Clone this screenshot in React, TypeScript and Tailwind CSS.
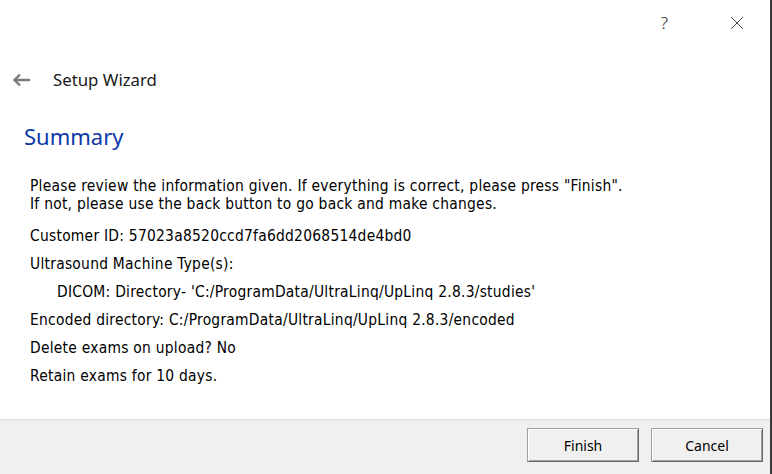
import { X } from "lucide-react";

const ui = "font-['Noto_Sans','Open_Sans',sans-serif]";

function WinButton({ label }: { label: string }) {
  return (
    <button
      className={`${ui} w-[112px] h-[34px] bg-[#f0f0f0] border border-[#a0a0a0] border-r-[#696969] border-b-[#696969] shadow-[inset_1px_1px_0_#ffffff,inset_-1px_-1px_0_#a0a0a0] text-[14px] text-black`}
    >
      {label}
    </button>
  );
}

export default function App() {
  return (
    <div className="w-[772px] h-[474px] bg-white flex flex-col border-r-2 border-r-[#3a3a3a] overflow-hidden">
      <div className="h-[45px] flex items-center justify-end pr-[22px] gap-[58px] text-[#222]">
        <span className={`${ui} text-[17px] font-light leading-none`}>?</span>
        <X size={22} strokeWidth={1} className="text-[#333]" />
      </div>

      <div className="flex items-center h-[30px] mt-[20px] pl-[12px]">
        <svg width="19" height="14" viewBox="0 0 19 14" className="text-[#7a7a7a]">
          <path d="M18 7H3M8 1.5L2.5 7L8 12.5" fill="none" stroke="currentColor" strokeWidth="2.4" />
        </svg>
        <span className={`${ui} ml-[22px] text-[16.8px] text-[#1a1a1a]`}>Setup Wizard</span>
      </div>

      <div className={`${ui} pl-[24px] mt-[24px] text-[22px] text-[#0a3aa8] h-[34px] leading-[34px]`}>
        Summary
      </div>

      <div className="font-['DejaVu_Sans_Condensed','DejaVu_Sans',sans-serif] font-stretch-condensed pl-[30px] mt-[24px] text-[15.4px] tracking-[0.26px] text-black leading-[18px] flex flex-col">
        <p>Please review the information given. If everything is correct, please press "Finish".</p>
        <p>If not, please use the back button to go back and make changes.</p>
        <div className="flex flex-col mt-[14px] gap-[10px]">
          <p>Customer ID: 57023a8520ccd7fa6dd2068514de4bd0</p>
          <p>Ultrasound Machine Type(s):</p>
          <p className="pl-[27px]">DICOM: Directory- 'C:/ProgramData/UltraLinq/UpLinq 2.8.3/studies'</p>
          <p>Encoded directory: C:/ProgramData/UltraLinq/UpLinq 2.8.3/encoded</p>
          <p>Delete exams on upload? No</p>
          <p>Retain exams for 10 days.</p>
        </div>
      </div>

      <div className="mt-auto h-[55px] bg-[#f0f0f0] border-t border-t-[#dfdfdf] flex items-start justify-end pt-[8px] pr-[7px] gap-[12px]">
        <WinButton label="Finish" />
        <WinButton label="Cancel" />
      </div>
    </div>
  );
}
